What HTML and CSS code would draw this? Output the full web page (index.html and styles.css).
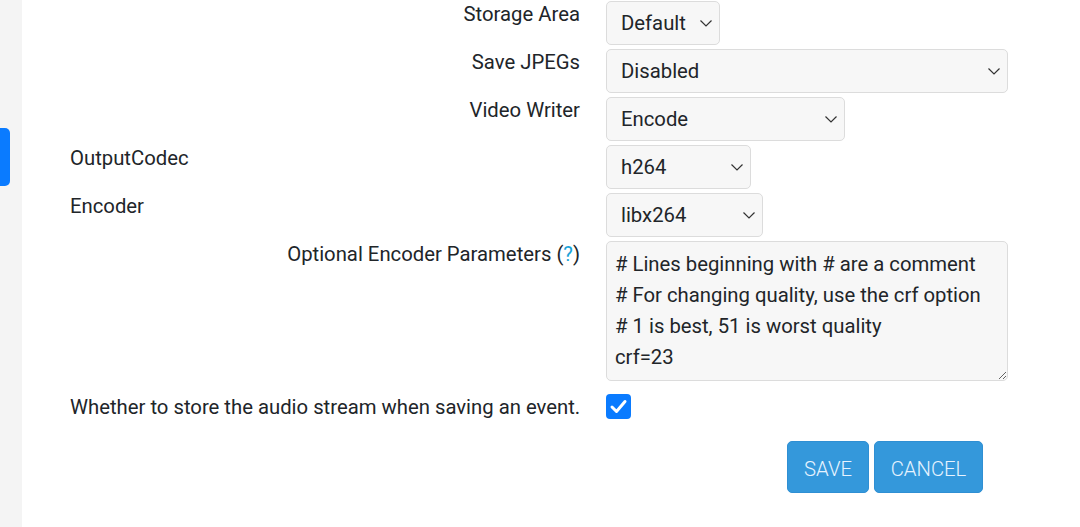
FILE: index.html
```html
<!DOCTYPE html>
<html>
<head>
<meta charset="utf-8">
<link rel="stylesheet" href="styles.css">
</head>
<body>
<div class="page">
  <aside class="rail"><span class="rail-tab"></span></aside>
  <main class="content">
    <form class="form">
      <div class="row">
        <label class="lbl right">Storage Area</label>
        <div class="sel w-storage"><select><option>Default</option></select><svg class="chev" viewBox="0 0 12 7"><path d="M0.5 0.5 L6 6 L11.5 0.5" /></svg></div>
      </div>
      <div class="row">
        <label class="lbl right">Save JPEGs</label>
        <div class="sel w-jpeg"><select><option>Disabled</option></select><svg class="chev" viewBox="0 0 12 7"><path d="M0.5 0.5 L6 6 L11.5 0.5" /></svg></div>
      </div>
      <div class="row">
        <label class="lbl right">Video Writer</label>
        <div class="sel w-writer"><select><option>Encode</option></select><svg class="chev" viewBox="0 0 12 7"><path d="M0.5 0.5 L6 6 L11.5 0.5" /></svg></div>
      </div>
      <div class="row">
        <label class="lbl">OutputCodec</label>
        <div class="sel w-codec"><select><option>h264</option></select><svg class="chev" viewBox="0 0 12 7"><path d="M0.5 0.5 L6 6 L11.5 0.5" /></svg></div>
      </div>
      <div class="row">
        <label class="lbl">Encoder</label>
        <div class="sel w-encoder"><select><option>libx264</option></select><svg class="chev" viewBox="0 0 12 7"><path d="M0.5 0.5 L6 6 L11.5 0.5" /></svg></div>
      </div>
      <div class="row">
        <label class="lbl right">Optional Encoder Parameters (<a class="help" href="#">?</a>)</label>
        <textarea class="params"># Lines beginning with # are a comment
# For changing quality, use the crf option
# 1 is best, 51 is worst quality
crf=23</textarea>
      </div>
      <div class="row row-check">
        <label class="lbl">Whether to store the audio stream when saving an event.</label>
        <span class="check"><svg viewBox="0 0 25 25"><path d="M6 13 L10.5 17.5 L19 7.5" /></svg></span>
      </div>
      <div class="actions">
        <button type="button" class="btn btn-save">SAVE</button>
        <button type="button" class="btn btn-cancel">CANCEL</button>
      </div>
    </form>
  </main>
</div>
</body>
</html>
```

FILE: styles.css
```css
html, body {
  margin: 0;
  padding: 0;
  background: #ffffff;
}

body {
  font-family: Roboto, "Liberation Sans", Arial, sans-serif;
  color: #212529;
  font-size: 20.3px;
}

.page {
  display: flex;
  height: 527px;
  overflow: hidden;
}

.rail {
  width: 22px;
  flex: none;
  background: #f4f4f4;
  position: relative;
}

.rail-tab {
  position: absolute;
  left: 0;
  top: 128px;
  width: 10px;
  height: 58px;
  background: #0a7bff;
  border-radius: 0 5px 5px 0;
}

.content {
  flex: 1;
  padding: 1px 0 0 48px;
}

.form {
  display: flex;
  flex-direction: column;
}

.row {
  display: grid;
  grid-template-columns: 510px 1fr;
  column-gap: 26px;
  align-items: start;
  margin-bottom: 4px;
}

.lbl {
  line-height: 24px;
  padding-top: 1px;
  font-size: 20.3px;
  color: #212529;
  white-space: nowrap;
}

.lbl.right {
  text-align: right;
}

.help {
  color: #17a2d8;
  text-decoration: none;
}

.sel {
  position: relative;
  height: 44px;
  box-sizing: border-box;
}

.sel select {
  appearance: none;
  -webkit-appearance: none;
  width: 100%;
  height: 44px;
  box-sizing: border-box;
  border: 1px solid #dcdcdc;
  border-radius: 5px;
  background: #f7f7f7;
  font-family: inherit;
  font-size: 20.3px;
  color: #212529;
  padding: 0 30px 0 14px;
  margin: 0;
}

.chev {
  position: absolute;
  right: 8px;
  top: 19px;
  width: 12px;
  height: 7px;
  fill: none;
  stroke: #333;
  stroke-width: 1.2;
  pointer-events: none;
}

.w-storage { width: 114px; }
.w-jpeg { width: 402px; }
.w-writer { width: 239px; }
.w-codec { width: 145px; }
.w-encoder { width: 157px; }

.params {
  width: 402px;
  height: 140px;
  box-sizing: border-box;
  border: 1px solid #dcdcdc;
  border-radius: 5px;
  background: #f7f7f7;
  font-family: inherit;
  font-size: 20.3px;
  line-height: 31px;
  color: #212529;
  padding: 7px 8px;
  margin: 0;
  resize: vertical;
  overflow: hidden;
}

.row-check {
  align-items: center;
  margin-top: 9px;
  margin-bottom: 0;
}

.row-check .lbl {
  padding-top: 0;
}

.check {
  width: 25px;
  height: 25px;
  border-radius: 4px;
  background: #0a7bff;
  display: block;
}

.check svg {
  width: 25px;
  height: 25px;
  fill: none;
  stroke: #ffffff;
  stroke-width: 3;
  stroke-linecap: round;
  stroke-linejoin: round;
}

.actions {
  display: flex;
  gap: 5px;
  padding-left: 717px;
  margin-top: 22px;
}

.btn {
  height: 52px;
  border: 1px solid #2f8fd3;
  border-radius: 5px;
  background: #3498db;
  color: #e6f3ff;
  font-family: inherit;
  font-size: 20.3px;
  font-weight: 300;
  padding: 3px 0 0 0;
}

.btn-save { width: 82px; }
.btn-cancel { width: 109px; }
```
